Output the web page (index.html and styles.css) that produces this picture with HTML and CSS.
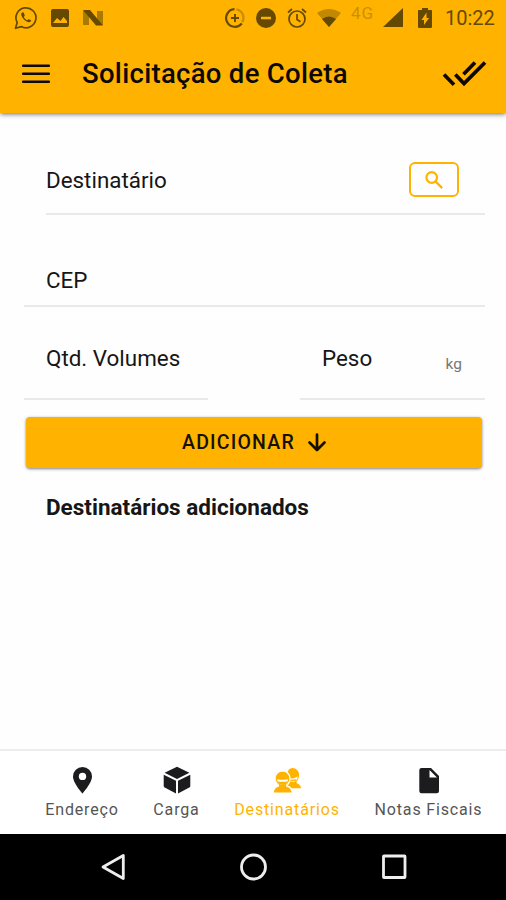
FILE: index.html
```html
<!DOCTYPE html>
<html lang="pt-BR">
<head>
<meta charset="utf-8">
<title>Solicitação de Coleta</title>
<link rel="stylesheet" href="styles.css">
</head>
<body>
<div class="app">
  <header class="top">
    <div class="status">
      <div class="status-left">
        <svg width="24" height="24" viewBox="0 0 24 24" fill="none" stroke="currentColor" stroke-width="1.7"><path d="M1.500 22.300l1.700-5.700A10 10 0 1 1 7.200 20.600z" stroke-linejoin="round"/><path d="M8.400 6.200c-1.200.8-1.600 2-.9 3.600 1.200 3 3.300 5.100 6.300 6.200 1.600.6 2.900.1 3.500-1.400l-2.700-1.500-1.300 1.200c-1.500-.7-2.700-1.900-3.500-3.400l1-1.300-1.100-3z" fill="currentColor" stroke="none"/></svg>
        <svg width="18" height="18" viewBox="0 0 18 18"><path fill="currentColor" fill-rule="evenodd" d="M2 0h14a2 2 0 0 1 2 2v14a2 2 0 0 1-2 2H2a2 2 0 0 1-2-2V2a2 2 0 0 1 2-2zm0 14h14v-2l-3.500-4-3 4-3.500-3z"/></svg>
        <svg width="20" height="16" viewBox="0 0 20 16"><path fill="currentColor" opacity=".55" d="M0 1h6v14H0zM14 1h6v14h-6z"/><path fill="currentColor" d="M0 0h7L20 15.500h-7z"/></svg>
      </div>
      <div class="status-right">
        <svg width="20" height="20" viewBox="0 0 20 20" fill="none" stroke="currentColor" stroke-width="2.200"><path d="M9.500 1.200A8.800 8.800 0 1 0 16.800 15.500"/><path d="M11.500 1.300a8.800 8.800 0 0 1 5.800 13" opacity=".35"/><path d="M10 6v8M6 10h8" stroke-width="1.900"/></svg>
        <svg width="20" height="20" viewBox="0 0 20 20"><path fill="currentColor" fill-rule="evenodd" d="M10 0a10 10 0 1 1 0 20 10 10 0 0 1 0-20zM5 8.700v2.600h10V8.700z"/></svg>
        <svg width="20" height="20" viewBox="0 0 20 20" fill="none" stroke="currentColor" stroke-width="1.700"><circle cx="10" cy="11" r="8"/><path d="M10 6v5.500l3.500 2.200M1 4.500L5 1M19 4.500L15 1"/></svg>
        <svg class="wifi" width="24" height="18" viewBox="0 0 24 18"><path fill="currentColor" opacity=".4" d="M0 4Q12-4 24 4L12 18z"/><path fill="currentColor" d="M5 10q7-5 14 0l-7 8z"/></svg>
        <span class="network">4G</span>
        <svg class="signal" width="20" height="19" viewBox="0 0 20 19"><path fill="currentColor" d="M20 0v19H0z"/></svg>
        <svg class="battery" width="14" height="20" viewBox="0 0 14 20"><path fill="currentColor" fill-rule="evenodd" d="M4 0h6v2h3.200q.8 0 .8.800V19q0 1-1 1H1q-1 0-1-1V2.800Q0 2 .8 2H4zM8.500 4.500l-5 7.500H6v5l5-7H8.500z"/></svg>
        <time class="clock">10:22</time>
      </div>
    </div>
    <div class="toolbar">
      <svg class="menu" width="28" height="20" viewBox="0 0 28 20"><path d="M1.200 1.700h25.600M1.200 9.700h25.600M1.200 17.700h25.600" stroke="currentColor" stroke-width="2.600" stroke-linecap="round"/></svg>
      <h1 class="title">Solicitação de Coleta</h1>
      <svg class="done" width="44" height="26" viewBox="0 0 44 26" fill="none" stroke="currentColor" stroke-width="3.700"><path d="M2 13.500l10 10.300M13.300 13.500L22 22.500 43 1.500M21.500 13.300L33 1.500"/></svg>
    </div>
  </header>

  <main class="form">
    <div class="field recipient">
      <label>Destinatário</label>
      <button class="search" aria-label="Buscar"><svg width="18" height="18" viewBox="0 0 18 18" fill="none" stroke="currentColor" stroke-width="2.200"><circle cx="6.700" cy="6.500" r="5.300"/><path d="M10.500 10.400l6.700 6.700"/></svg></button>
    </div>
    <div class="field zip"><label>CEP</label></div>
    <div class="pair">
      <div class="field"><label>Qtd. Volumes</label></div>
      <div class="field"><label>Peso</label><span class="unit">kg</span></div>
    </div>
    <button class="add"><span class="add-label">ADICIONAR</span><svg width="18" height="19" viewBox="0 0 18 19" fill="none" stroke="currentColor" stroke-width="2.700" stroke-linecap="round" stroke-linejoin="round"><path d="M9 1.500v15M1.500 9.500L9 17l7.500-7.500"/></svg></button>
    <h2 class="subtitle">Destinatários adicionados</h2>
  </main>

  <nav class="tabs">
    <a class="tab endereco"><svg width="28" height="28" viewBox="0 0 28 28"><path fill="currentColor" fill-rule="evenodd" d="M14.500 1a9.500 9.500 0 0 1 9.500 9.500C24 17 14.500 27.500 14.500 27.500S5 17 5 10.500A9.500 9.500 0 0 1 14.500 1zm0 5.700a3.700 3.700 0 1 0 0 7.400 3.700 3.700 0 0 0 0-7.400z"/></svg><span>Endereço</span></a>
    <a class="tab carga"><svg width="28" height="28" viewBox="0 0 28 28" fill="currentColor"><path d="M14 .8l12.400 6L14 13 1.600 6.800zM.7 8.700L13 14.800v12.700L1.700 21.600q-1-.5-1-1.600zM27.300 8.700L15 14.800v12.700l11.300-5.900q1-.5 1-1.600z"/></svg><span>Carga</span></a>
    <a class="tab destinatarios active"><svg width="28" height="28" viewBox="0 0 28 28"><path fill="currentColor" d="M19.500 2a6.600 6.600 0 0 1 6.600 6.600c0 3-1 5.400-2.600 7l.3 1.600c2.200.8 4 2 4.200 5H14V8q1-6 5.500-6z"/><path d="M16.500 12.800q4.500 0 8.300-2.300c-.2 2.300-1.400 4.300-3.200 5.300l-4.800-.4z" fill="#fff"/><path d="M17 14.200q3 .5 6.200-.3" stroke="currentColor" stroke-width="1.200" fill="none"/><path fill="currentColor" stroke="#fff" stroke-width="1.400" d="M9.500 4.700a7.600 7.600 0 0 1 7.500 7.500c0 2.800-1.200 5.300-3.200 6.800v1c3.300.8 5.500 2.400 5.500 7.200H0c0-4.800 2.200-6.400 5.300-7.200v-1A8.600 8.600 0 0 1 2 12.200a7.500 7.500 0 0 1 7.500-7.500z"/><path d="M4.200 13.300q5.300 1.100 10.800 0c0 3-2.400 5.600-5.400 5.600s-5.300-2.600-5.400-5.600z" fill="#fff"/><path d="M4.700 15.200q4.900 1 9.800 0c-.7 2.300-2.500 3.700-4.900 3.700s-4.200-1.400-4.900-3.700z" fill="currentColor"/></svg><span>Destinatários</span></a>
    <a class="tab notas"><svg width="28" height="28" viewBox="0 0 28 28"><path fill="currentColor" fill-rule="evenodd" d="M6.500 2H16l8 8v15q0 2.200-2.200 2.200H6.500Q4.300 27.200 4.300 25V4.200Q4.300 2 6.500 2zM14.500 4v7.500H22z"/></svg><span>Notas Fiscais</span></a>
  </nav>

  <footer class="system">
    <svg width="26" height="28" viewBox="0 0 26 28"><path d="M23.300 2.500v23L3 14z"/></svg>
    <svg width="28" height="28" viewBox="0 0 28 28"><circle cx="13.500" cy="14" r="12"/></svg>
    <svg width="26" height="26" viewBox="0 0 26 26"><rect x="2.500" y="2" width="21.500" height="21.500" rx=".5"/></svg>
  </footer>
</div>
</body>
</html>
```

FILE: styles.css
```css
* { box-sizing: border-box; }
body { margin: 0; background: #fefefe; font-family: Roboto, "Liberation Sans", sans-serif; color: #161616; }
svg { display: block; flex: none; overflow: visible; }
button { font-family: inherit; }
.app { width: 506px; height: 900px; display: flex; flex-direction: column; overflow: hidden; }

.top { height: 113px; flex: none; background: #ffb300; box-shadow: 0 1px 5px rgba(0, 0, 0, .6); }
.status { height: 35px; display: flex; justify-content: space-between; padding: 0 10px 0 14px; color: #654900; }
.status-left, .status-right { display: flex; align-items: center; }
.status-left { gap: 14px; }
.status-left svg:first-child { margin-right: -1px; }
.status-right { gap: 11px; }
.wifi { margin-left: -1px; }
.network { width: 24px; font-size: 17px; line-height: 16px; letter-spacing: 1px; color: #cc8f00; margin: 0 -3px 10px -1px; }
.signal { margin-right: 4px; }
.battery { margin: 0 3px 0 0; }
.clock { font-size: 20px; width: 51px; margin-left: -1px; padding-top: 1px; white-space: nowrap; }

.toolbar { height: 77px; display: flex; align-items: center; padding: 0 20px 0 22px; color: #0d0900; }
.title { margin: 0 auto 0 32px; font-size: 27.500px; font-weight: 500; line-height: 36px; letter-spacing: .3px; white-space: nowrap; }

.form { flex: 1; padding: 33px 21px 0 24px; display: flex; flex-direction: column; }
.field { display: flex; align-items: flex-start; justify-content: space-between; border-bottom: 2px solid #e9e9e9; }
.field label { font-size: 22.400px; line-height: 30px; white-space: nowrap; }
.recipient { height: 69px; margin-left: 22px; padding: 19px 26px 0 0; }
.search { width: 50px; height: 35px; margin-top: -3px; padding: 0; border: 2.500px solid #ffb300; border-radius: 6px; background: none; color: #ffb300; display: flex; align-items: center; justify-content: center; }
.zip { height: 92px; padding: 50px 0 0 22px; }
.pair { display: grid; grid-template-columns: 184px 185px; justify-content: space-between; }
.pair .field { height: 93px; padding: 36px 23px 0 22px; }
.unit { font-size: 15.500px; line-height: 20px; color: #777; margin-top: 11px; }
.add { height: 51px; flex: none; margin: 17px 3px 0 2px; padding: 0 0 1px; border: 0; border-radius: 4px; background: #ffb300; box-shadow: 0 1px 3px rgba(0, 0, 0, .5); color: #151000; display: flex; align-items: center; justify-content: center; gap: 13px; }
.add-label { font-size: 19.500px; font-weight: 500; letter-spacing: 1.200px; }
.subtitle { margin: 24px 0 0 22px; font-size: 22.500px; line-height: 30px; font-weight: 700; }

.tabs { height: 85px; flex: none; border-top: 2px solid #ededed; display: flex; gap: 34.500px; padding: 15px 0 0 45px; background: #fff; }
.tab { display: flex; flex-direction: column; align-items: center; gap: 5px; color: #1c1c1f; font-size: 16px; line-height: 22px; white-space: nowrap; letter-spacing: .85px; }
.tab span { color: #555; }
.tab.active, .tab.active span { color: #ffb300; }
.endereco { width: 74px; }
.carga { width: 46px; }
.destinatarios { width: 106px; }
.notas { width: 108px; }

.system { height: 66px; flex: none; background: #000; display: flex; justify-content: space-between; align-items: center; padding: 0 99px 0 100px; }
.system svg { fill: none; stroke: #eee; stroke-width: 2.800; stroke-linejoin: round; }
```
